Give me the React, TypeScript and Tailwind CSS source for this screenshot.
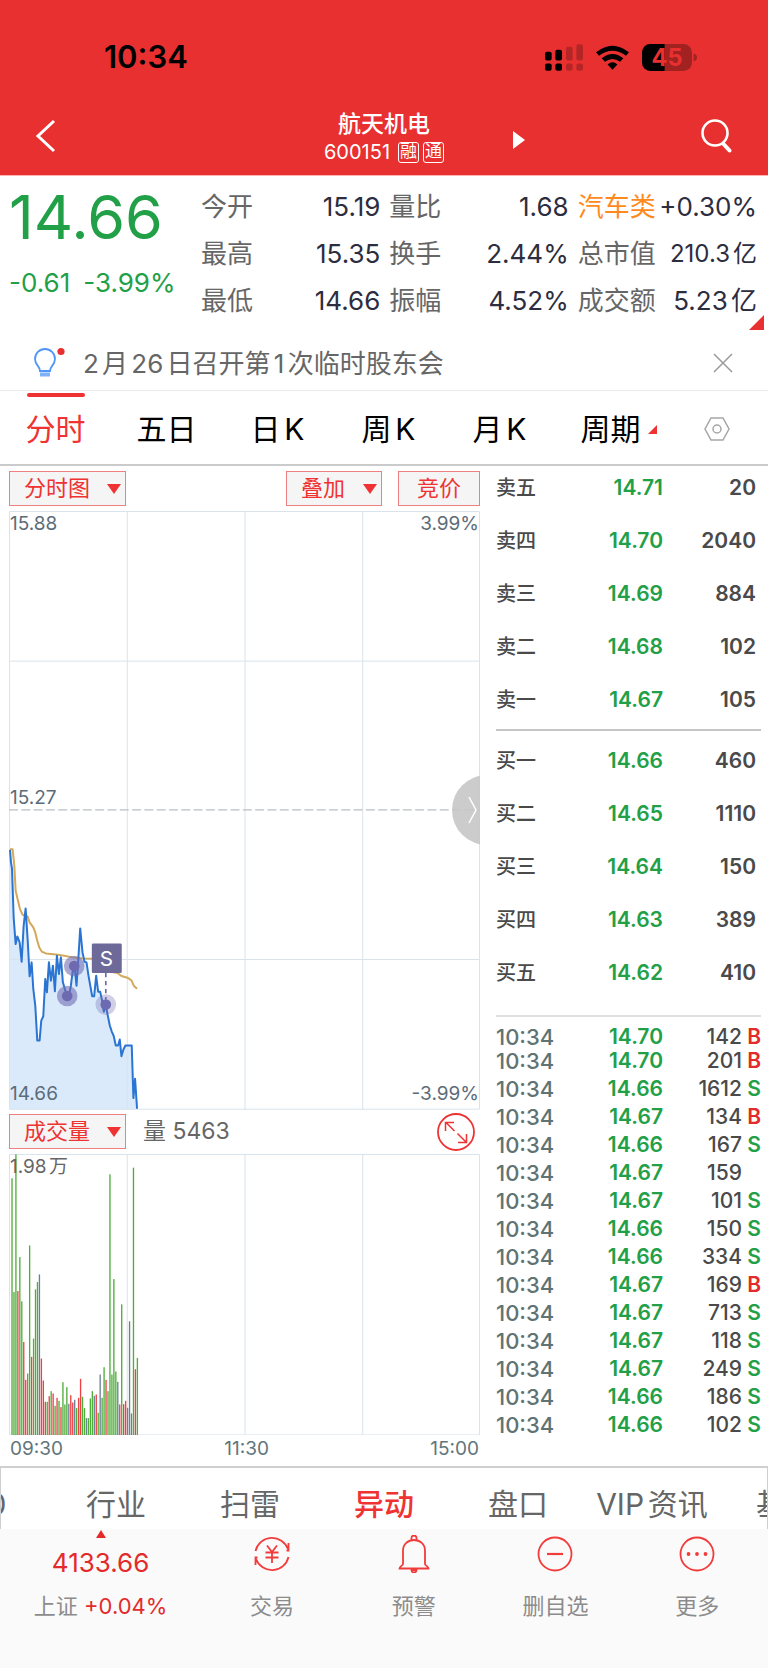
import React from 'react';

type Tone = 'g' | 'r' | 'n';

const STATS: { label: string; value: string; hot?: boolean; small?: boolean }[] = [
  { label: '今开', value: '15.19' },
  { label: '量比', value: '1.68' },
  { label: '汽车类', value: '+0.30%', hot: true },
  { label: '最高', value: '15.35' },
  { label: '换手', value: '2.44%' },
  { label: '总市值', value: '210.3亿', small: true },
  { label: '最低', value: '14.66' },
  { label: '振幅', value: '4.52%' },
  { label: '成交额', value: '5.23亿' },
];

const PERIODS = ['分时', '五日', '日K', '周K', '月K', '周期'];

const SELLS = [
  ['卖五', '14.71', '20'],
  ['卖四', '14.70', '2040'],
  ['卖三', '14.69', '884'],
  ['卖二', '14.68', '102'],
  ['卖一', '14.67', '105'],
];

const BUYS = [
  ['买一', '14.66', '460'],
  ['买二', '14.65', '1110'],
  ['买三', '14.64', '150'],
  ['买四', '14.63', '389'],
  ['买五', '14.62', '410'],
];

const TICKS = [
  ['14.70', '142', 'B'],
  ['14.70', '201', 'B'],
  ['14.66', '1612', 'S'],
  ['14.67', '134', 'B'],
  ['14.66', '167', 'S'],
  ['14.67', '159', ''],
  ['14.67', '101', 'S'],
  ['14.66', '150', 'S'],
  ['14.66', '334', 'S'],
  ['14.67', '169', 'B'],
  ['14.67', '713', 'S'],
  ['14.67', '118', 'S'],
  ['14.67', '249', 'S'],
  ['14.66', '186', 'S'],
  ['14.66', '102', 'S'],
];

const PRICE_LINE =
  '27,62 30,100 33,118 38,265 44,345 49,322 56,340 62,398 68,290 74,238 80,330 86,442 92,400 97,480 103,530 109,635 116,635 121,575 127,562 133,450 138,490 144,400 150,455 156,410 162,487 168,380 174,435 180,385 186,460 192,480 198,500 204,500 210,470 215,430 221,412 227,470 233,380 238,298 245,370 251,398 257,400 263,440 274,502 280,502 286,440 292,488 298,488 304,515 309,548 315,528 321,560 327,590 333,608 339,622 345,650 352,650 357,632 362,682 368,662 374,650 393,650 398,808 403,750 409,840';

const AVERAGE_LINE =
  '27,60 35,60 40,110 44,185 50,210 57,240 65,257 80,262 86,280 97,295 103,310 109,335 115,355 123,368 135,373 165,376 190,380 215,385 245,388 275,389 330,428 350,432 362,441 380,446 392,454 399,470 409,479';

// one bar per minute: top edge and direction
const VOLUME: [number, Tone][] = [
  [88, 'g'], [430, 'g'], [16, 'g'], [427, 'r'], [325, 'g'], [458, 'g'], [580, 'r'], [694, 'r'],
  [675, 'g'], [290, 'g'], [625, 'r'], [570, 'g'], [422, 'g'], [400, 'g'], [377, 'n'], [630, 'r'],
  [696, 'r'], [760, 'r'], [760, 'g'], [743, 'r'], [728, 'g'], [735, 'r'], [772, 'g'], [748, 'r'],
  [757, 'g'], [776, 'r'], [701, 'g'], [768, 'g'], [716, 'g'], [766, 'n'], [740, 'r'], [762, 'r'],
  [754, 'n'], [779, 'g'], [748, 'r'], [691, 'r'], [745, 'g'], [779, 'g'], [809, 'n'], [809, 'g'],
  [750, 'g'], [728, 'g'], [742, 'n'], [738, 'r'], [793, 'g'], [678, 'n'], [748, 'g'], [656, 'g'],
  [694, 'r'], [728, 'g'], [76, 'g'], [678, 'g'], [391, 'g'], [669, 'g'], [700, 'n'], [768, 'r'],
  [467, 'g'], [767, 'r'], [757, 'r'], [778, 'n'], [518, 'n'], [795, 'n'], [56, 'g'], [662, 'r'],
  [628, 'g'],
];

const BAR_COLOR: Record<Tone, string> = { g: '#4fae3a', r: '#ef4044', n: '#6b8095' };

const MORE_TABS = ['F10', '行业', '扫雷', '异动', '盘口', 'VIP资讯', '基金'];

const StatusBar = () => (
  <div className="flex items-center justify-between pt-[38px] pl-[104px] pr-[71px]">
    <span className="text-[31px] leading-[38px] font-semibold text-black">10:34</span>
    <div className="flex items-center gap-[13px]">
      <svg viewBox="75 39 114 80" className="w-[38px] h-[27px]">
        <rect x="75" y="62" width="20" height="26" rx="6" />
        <rect x="106" y="56" width="20" height="32" rx="6" />
        <rect x="138" y="47" width="20" height="41" rx="6" fillOpacity=".22" />
        <rect x="169" y="39" width="20" height="49" rx="6" fillOpacity=".22" />
        <rect x="75" y="97" width="20" height="22" rx="6" />
        <rect x="106" y="97" width="20" height="22" rx="6" />
        <rect x="138" y="97" width="20" height="22" rx="6" fillOpacity=".22" />
        <rect x="169" y="97" width="20" height="22" rx="6" fillOpacity=".22" />
      </svg>
      <svg viewBox="228 40 100 76" className="w-[33px] h-[25px]">
        <path d="M228 62 Q278 22 328 62 L319 73 Q278 42 237 73 Z" />
        <path d="M245 80 Q278 54 311 80 L301 91 Q278 74 255 91 Z" />
        <path d="M263 99 Q278 86 293 99 L278 115 Z" />
      </svg>
      <svg viewBox="368 39 163 80" className="w-[55px] h-[27px]">
        <defs>
          <clipPath id="charge">
            <rect x="368" y="39" width="67" height="80" />
          </clipPath>
        </defs>
        <rect x="368" y="39" width="148" height="80" rx="25" fillOpacity=".3" />
        <rect x="368" y="39" width="148" height="80" rx="25" clipPath="url(#charge)" />
        <path d="M521 68 q10 2 10 11 q0 9 -10 11 Z" fillOpacity=".3" />
        <text x="442" y="105" textAnchor="middle" fontSize="70" fontWeight="700" fill="#e83030">45</text>
      </svg>
    </div>
  </div>
);

const TitleBar = () => (
  <div className="grid grid-cols-[1fr_auto_1fr] items-center pt-8 pb-[11px] text-white">
    <button aria-label="返回" className="ml-[35px] w-[22px]">
      <svg viewBox="0 0 22 34" className="w-[22px] h-[34px]" fill="none" stroke="currentColor" strokeWidth="3">
        <path d="M19 2 3 17 19 32" />
      </svg>
    </button>
    <div className="flex flex-col items-center">
      <h1 className="text-[23px] leading-8 font-medium">航天机电</h1>
      <div className="flex h-6 items-center gap-1">
        <span className="mr-1 text-[20px] leading-6">600151</span>
        <span className="flex h-[21px] w-[21px] items-center justify-center rounded-[3px] border border-white text-[17px]">融</span>
        <span className="flex h-[21px] w-[21px] items-center justify-center rounded-[3px] border border-white text-[17px]">通</span>
      </div>
    </div>
    <div className="flex items-center justify-between pl-[69px] pr-[35px]">
      <button aria-label="下一只" className="pt-2">
        <svg viewBox="0 0 12 18" className="w-3 h-[18px]" fill="currentColor">
          <path d="M0 0 12 9 0 18Z" />
        </svg>
      </button>
      <button aria-label="搜索">
        <svg viewBox="0 0 33 34" className="w-[33px] h-[34px]" fill="none" stroke="currentColor" strokeLinecap="round">
          <circle cx="15" cy="14" r="12.5" strokeWidth="2.6" />
          <path d="M23.500 25 29.500 31.500" strokeWidth="4" />
        </svg>
      </button>
    </div>
  </div>
);

const Summary = () => (
  <section className="relative flex pt-[7px] pb-3">
    <div className="w-[201px] shrink-0 pl-[9px] text-[#22a047]">
      <div className="text-[61px] leading-[68px] whitespace-nowrap">14.66</div>
      <div className="flex gap-[13px] pt-[17px] text-[26px] leading-[30px] whitespace-nowrap">
        <span>-0.61</span>
        <span>-3.99%</span>
      </div>
    </div>
    <dl className="grid flex-1 grid-cols-3 gap-x-[9px] pr-[11px]">
      {STATS.map(s => (
        <div key={s.label} className="flex h-[47px] items-center justify-between whitespace-nowrap">
          <dt className={s.hot ? 'text-[26px] text-[#ff8a1c]' : 'text-[26px] text-[#666]'}>{s.label}</dt>
          <dd className={s.small ? 'text-2xl text-[#2d2d40]' : 'text-[26px] text-[#2d2d40]'}>{s.value}</dd>
        </div>
      ))}
    </dl>
    <svg viewBox="0 0 15 15" className="absolute right-1 bottom-[6px] size-[15px]" fill="#e83030">
      <path d="M15 0V15H0Z" />
    </svg>
  </section>
);

const Notice = () => (
  <div className="flex h-[55px] items-center border-b border-[#ececec] pl-[33px] pr-[35px]">
    <svg viewBox="0 0 34 32" className="w-[34px] h-8" fill="none" stroke="#4f96f6" strokeWidth="1.8">
      <path d="M7 24C7 19 2 18 2 12a10 10 0 0 1 20 0c0 6-5 7-5 12Z" />
      <path d="M7 27.500H17" strokeWidth="4" stroke="#7fb2f9" />
      <circle cx="28" cy="4.500" r="3.600" fill="#e83030" stroke="none" />
    </svg>
    <a href="#notice" className="ml-4 flex-1 text-[26px] text-[#666]">2月26日召开第1次临时股东会</a>
    <button aria-label="关闭">
      <svg viewBox="0 0 20 20" className="size-5" stroke="#999" strokeWidth="1.5">
        <path d="M1 1 19 19M19 1 1 19" />
      </svg>
    </button>
  </div>
);

const PeriodTabs = () => (
  <nav className="grid h-[75px] grid-cols-[repeat(6,37fr)_34fr] border-b-2 border-[#cbcbcb]">
    {PERIODS.map((p, i) => (
      <button
        key={p}
        className={
          i === 0
            ? 'relative flex items-center justify-center pt-1 text-[30px] text-[#ef3333]'
            : 'relative flex items-center justify-center pt-1 text-[30px] text-black'
        }
      >
        {i === 0 && <span className="absolute top-[2px] h-1 w-[58px] rounded-full bg-[#ef3333]" />}
        {p}
        {p === '周期' && (
          <svg viewBox="0 0 9 9" className="absolute right-[9px] size-[9px]" fill="#ef3333">
            <path d="M9 0V9H0Z" />
          </svg>
        )}
      </button>
    ))}
    <button aria-label="设置" className="flex items-center justify-center pt-[2px]">
      <svg viewBox="0 0 26 24" className="w-[26px] h-6" fill="none" stroke="#a6a6a6" strokeWidth="1.5">
        <path d="M7 1H19L25 12 19 23H7L1 12Z" />
        <circle cx="13" cy="12" r="4" />
      </svg>
    </button>
  </nav>
);

interface PickerProps {
  label: string;
  value: string;
  className: string;
}

const Picker: React.FC<PickerProps> = ({ label, value, className }) => (
  <div className={className}>
    <select
      aria-label={label}
      className="block h-[35px] w-full appearance-none border border-[#f08080] bg-[#f5f5f5] pl-[14px] text-[22px] leading-[33px] text-[#ef3333]"
    >
      <option>{value}</option>
    </select>
    <svg viewBox="0 0 14 10" className="pointer-events-none absolute right-[5px] top-[13px] w-[14px] h-[10px]" fill="#ef3333">
      <path d="M0 0H14L7 10Z" />
    </svg>
  </div>
);

const Marker = ({ x, y, faint }: { x: number; y: number; faint?: boolean }) => (
  <g fill="#6e6ab2">
    <circle cx={x} cy={y} r="31" fillOpacity={faint ? 0.32 : 0.58} />
    <circle cx={x} cy={y} r="16" />
  </g>
);

const PriceChart = () => (
  <div className="relative mt-[5px] text-[19px] leading-6 text-[#5b6c79]">
    <svg viewBox="0 0 1416 1800" className="block w-full h-auto">
      <g transform="translate(-24 957)">
        <polygon points={`${PRICE_LINE} 409,843 27,843`} fill="#dbeafb" />
      </g>
      <g fill="none" stroke="#d9e3ec" strokeWidth="3">
        <path d="M1.500 1.500H1414.500V1798.500H1.500Z" />
        <path d="M355.500 0V1800M709.500 0V1800M1063.500 0V1800M0 451.500H1416M0 1348.500H1416" />
      </g>
      <path d="M0 898.500H1416" stroke="#b9c0c4" strokeWidth="4" strokeDasharray="27 10" />
      <g transform="translate(-24 957)" fill="none" strokeLinejoin="round">
        <polyline points={AVERAGE_LINE} stroke="#d3a95c" strokeWidth="6" />
        <polyline points={PRICE_LINE} stroke="#2a74d2" strokeWidth="6" />
        <Marker x={220} y={411} />
        <Marker x={199} y={501} />
        <Marker x={315} y={527} faint />
        <path d="M315 432V512" stroke="#6e6ab2" strokeWidth="5" strokeDasharray="13 11" />
        <rect x="273" y="343" width="90" height="89" rx="4" fill="#6d6a9a" />
        <text x="317" y="410" textAnchor="middle" fontSize="62" fill="#fff">S</text>
      </g>
    </svg>
    <span className="absolute left-px top-px">15.88</span>
    <span className="absolute right-px top-px">3.99%</span>
    <span className="absolute left-px top-[275px]">15.27</span>
    <span className="absolute left-px bottom-1">14.66</span>
    <span className="absolute right-px bottom-1">-3.99%</span>
    <button aria-label="收起盘口" className="absolute right-0 top-[264px]">
      <svg viewBox="0 0 28 70" className="w-7 h-[70px]">
        <circle cx="35" cy="35" r="35" fill="#c6c6c6" fillOpacity=".9" />
        <path d="M17 22 24 35 17 48" fill="none" stroke="#fff" strokeWidth="1.500" />
      </svg>
    </button>
  </div>
);

const VolumeChart = () => (
  <div className="relative mt-1 text-[19px] leading-6 text-[#666]">
    <svg viewBox="0 0 1416 846" className="block w-full h-auto">
      <g fill="none" stroke="#d9e3ec" strokeWidth="3">
        <path d="M1.500 1.500H1414.500V844.500H1.500Z" />
        <path d="M355.500 0V846M709.500 0V846M1063.500 0V846" />
      </g>
      {VOLUME.map(([top, tone], i) => (
        <rect key={i} x={7 + i * 5.89} y={top - 15} width="4" height={860 - top} fill={BAR_COLOR[tone]} />
      ))}
    </svg>
    <span className="absolute left-px top-px">1.98万</span>
  </div>
);

const ChartPanel = () => (
  <section className="min-w-0 flex-1">
    <div className="flex justify-between">
      <Picker label="图表类型" value="分时图" className="relative w-[117px]" />
      <div className="flex gap-4">
        <Picker label="叠加指标" value="叠加" className="relative w-[96px]" />
        <button className="h-[35px] w-[82px] border border-[#f08080] bg-[#f5f5f5] text-[22px] leading-[33px] text-[#ef3333]">
          竞价
        </button>
      </div>
    </div>
    <PriceChart />
    <div className="mt-1 flex h-[36px] items-center">
      <Picker label="副图指标" value="成交量" className="relative w-[117px]" />
      <span className="ml-[17px] flex-1 text-[23px] text-[#666]">量 5463</span>
      <button aria-label="全屏" className="mr-[5px]">
        <svg viewBox="0 0 38 38" className="size-[38px]" fill="none" stroke="#ef3333" strokeWidth="1.500">
          <circle cx="19" cy="19" r="18" strokeWidth="1.800" />
          <path d="M17.500 18 9 9.500M8.500 18V9.500H17M20.500 20.500 29 29M29.500 21V29.500H21" />
        </svg>
      </button>
    </div>
    <VolumeChart />
    <div className="flex justify-between px-px pt-[2px] text-[19px] leading-6 text-[#62757a]">
      <span>09:30</span>
      <span>11:30</span>
      <span>15:00</span>
    </div>
  </section>
);

const QuoteTable = ({ rows, className }: { rows: string[][]; className: string }) => (
  <table className={className}>
    <tbody>
      {rows.map(([name, price, qty]) => (
        <tr key={name} className="h-[53px] align-top">
          <th className="w-1/4 text-left text-[20px] leading-6 font-medium text-[#4a4a4a]">{name}</th>
          <td className="text-right text-[#22a047]">{price}</td>
          <td className="w-[93px] text-right text-[#4a4a4a]">{qty}</td>
        </tr>
      ))}
    </tbody>
  </table>
);

const OrderBook = () => (
  <aside className="w-[265px] shrink-0 font-semibold text-[21px] leading-6">
    <div className="h-[260px] border-b-2 border-[#c6c6c6] pt-[5px] pr-[5px]">
      <QuoteTable rows={SELLS} className="w-full" />
    </div>
    <div className="h-[286px] border-b-2 border-[#e0e0e0] pt-[18px] pr-[5px]">
      <QuoteTable rows={BUYS} className="w-full" />
    </div>
    <table className="mt-2 w-full">
      <tbody>
        {TICKS.map(([price, qty, side], i) => (
          <tr key={i} className="h-7 align-top first:h-6">
            <td className="w-1/4 text-[22px] leading-6 font-medium text-[#5f7373]">10:34</td>
            <td className="text-right text-[#22a047]">{price}</td>
            <td className="w-[79px] text-right font-medium text-[#4a4a4a]">{qty}</td>
            <td className={side === 'B' ? 'w-[19px] text-right text-[#e32b2b]' : 'w-[19px] text-right text-[#22a047]'}>
              {side}
            </td>
          </tr>
        ))}
      </tbody>
    </table>
  </aside>
);

const MoreTabs = () => (
  <nav className="flex h-[63px] justify-center overflow-hidden border-x border-t-2 border-[#cfcfcf] pt-[11px]">
    {MORE_TABS.map(t => (
      <button
        key={t}
        className={
          t === '异动'
            ? 'w-[134px] shrink-0 text-[30px] leading-[45px] font-medium whitespace-nowrap text-[#ef3333]'
            : 'w-[134px] shrink-0 text-[30px] leading-[45px] whitespace-nowrap text-[#666]'
        }
      >
        {t}
      </button>
    ))}
  </nav>
);

interface ActionProps {
  label: string;
  children: React.ReactNode;
}

const Action: React.FC<ActionProps> = ({ label, children }) => (
  <button className="flex flex-col items-center pt-[6px] text-[22px] text-[#8c8c8c]">
    <svg viewBox="0 0 38 38" className="size-[38px]" fill="none" stroke="#f23c3c" strokeWidth="1.800">
      {children}
    </svg>
    <span className="mt-[17px] leading-8">{label}</span>
  </button>
);

const Footer = () => (
  <footer className="grid h-[139px] grid-cols-[1.42fr_repeat(4,1fr)] items-start bg-[#fafafa]">
    <a href="#index" className="flex flex-col items-center pt-px text-[#e32b2b]">
      <svg viewBox="0 0 10 8" className="w-[10px] h-2" fill="currentColor">
        <path d="M5 0 10 8H0Z" />
      </svg>
      <span className="mt-2 text-[26px] leading-[34px]">4133.66</span>
      <span className="mt-[10px] text-[22px] leading-8">
        <span className="text-[#8c8c8c]">上证</span> +0.04%
      </span>
    </a>
    <Action label="交易">
      <path d="M2.500 16A17 17 0 0 1 35 14M35.500 8V15.500H33.500M35.500 22A17 17 0 0 1 3 24M2.500 30V22.500H4.500" />
      <path d="M14 10.500 19 17 24 10.500M19 17V28M12.500 17.500H25.500M12.500 22.500H25.500" />
    </Action>
    <Action label="预警">
      <path d="M8 29V15.500C8 9 13 5 19 5s11 4 11 10.500V29c0 1.500 3.500 2.500 3.500 4.500H4.500C4.500 31.500 8 30.500 8 29Z" />
      <path d="M16.500 5V3a2.500 2.500 0 0 1 5 0v2M16.500 35h5a2.500 2.500 0 0 1-5 0Z" />
    </Action>
    <Action label="删自选">
      <circle cx="19" cy="19" r="16.500" />
      <path d="M11 19H27" strokeWidth="2.200" />
    </Action>
    <Action label="更多">
      <circle cx="19" cy="19" r="16.500" />
      <g fill="#f23c3c" stroke="none">
        <circle cx="10.500" cy="19" r="1.900" />
        <circle cx="19" cy="19" r="1.900" />
        <circle cx="27.500" cy="19" r="1.900" />
      </g>
    </Action>
  </footer>
);

export default function App() {
  return (
    <div className="min-h-screen bg-white font-['Inter','Noto_Sans_CJK_SC',sans-serif] [text-autospace:normal]">
      <header className="border-b border-[#fbb4b4] bg-[#e83030]">
        <StatusBar />
        <TitleBar />
      </header>
      <Summary />
      <Notice />
      <PeriodTabs />
      <main className="flex gap-4 pt-[5px] pb-[5px] pl-[9px] pr-[7px]">
        <ChartPanel />
        <OrderBook />
      </main>
      <MoreTabs />
      <Footer />
    </div>
  );
}
